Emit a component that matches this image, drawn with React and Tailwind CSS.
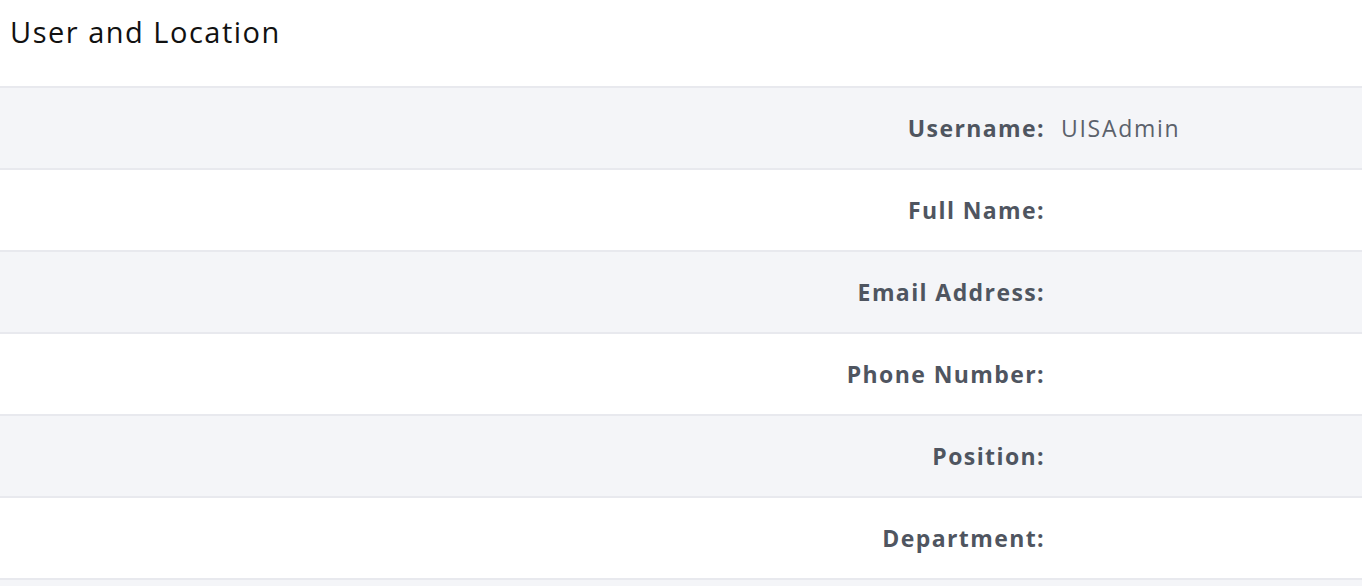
const rows = [
  { label: "Username:", value: "UISAdmin" },
  { label: "Full Name:", value: "" },
  { label: "Email Address:", value: "" },
  { label: "Phone Number:", value: "" },
  { label: "Position:", value: "" },
  { label: "Department:", value: "" },
  { label: "", value: "" },
];

export default function App() {
  return (
    <div className="w-[1362px] h-[586px] overflow-hidden bg-white font-['Open_Sans',sans-serif]">
      <div className="h-[86px] px-[10px] pt-[12px]">
        <h1 className="text-[29px] leading-[40px] tracking-[1.5px] text-[#111] font-normal">
          User and Location
        </h1>
      </div>
      {rows.map((row, i) => (
        <div
          key={i}
          className={`h-[82px] flex items-center border-t-2 border-[#e8e9ee] ${
            i % 2 === 0 ? "bg-[#f4f5f8]" : "bg-white"
          }`}
        >
          <div className="w-[1045px] text-right text-[23px] tracking-[1.4px] font-bold text-[#4f5560]">
            {row.label}
          </div>
          <div className="pl-[16px] text-[23px] tracking-[1.7px] text-[#5b616b]">
            {row.value}
          </div>
        </div>
      ))}
    </div>
  );
}
